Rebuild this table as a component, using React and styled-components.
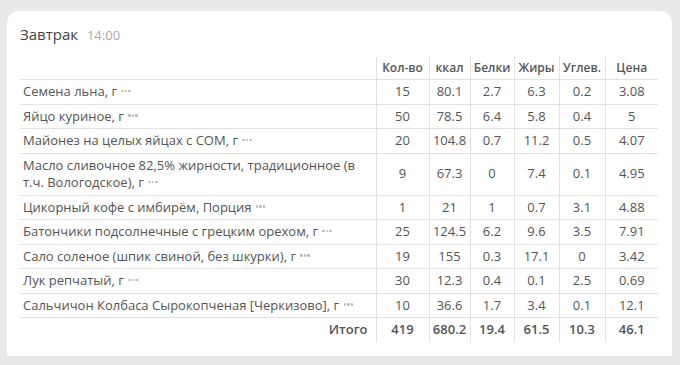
import React from "react";
import styled, { createGlobalStyle } from "styled-components";

const GlobalStyle = createGlobalStyle`
  html, body {
    margin: 0;
    padding: 0;
    background: #e9e9e9;
  }
  body {
    font-family: "Open Sans", "Liberation Sans", sans-serif;
  }
`;

const rows = [
  { name: "Семена льна, г", qty: 15, kcal: "80.1", p: "2.7", f: "6.3", c: "0.2", price: "3.08" },
  { name: "Яйцо куриное, г", qty: 50, kcal: "78.5", p: "6.4", f: "5.8", c: "0.4", price: "5" },
  { name: "Майонез на целых яйцах с СОМ, г", qty: 20, kcal: "104.8", p: "0.7", f: "11.2", c: "0.5", price: "4.07" },
  { name: "Масло сливочное 82,5% жирности, традиционное (в т.ч. Вологодское), г", qty: 9, kcal: "67.3", p: "0", f: "7.4", c: "0.1", price: "4.95" },
  { name: "Цикорный кофе с имбирём, Порция", qty: 1, kcal: "21", p: "1", f: "0.7", c: "3.1", price: "4.88" },
  { name: "Батончики подсолнечные с грецким орехом, г", qty: 25, kcal: "124.5", p: "6.2", f: "9.6", c: "3.5", price: "7.91" },
  { name: "Сало соленое (шпик свиной, без шкурки), г", qty: 19, kcal: "155", p: "0.3", f: "17.1", c: "0", price: "3.42" },
  { name: "Лук репчатый, г", qty: 30, kcal: "12.3", p: "0.4", f: "0.1", c: "2.5", price: "0.69" },
  { name: "Сальчичон Колбаса Сырокопченая [Черкизово], г", qty: 10, kcal: "36.6", p: "1.7", f: "3.4", c: "0.1", price: "12.1" },
];

export default function App() {
  return (
    <Page>
      <GlobalStyle />
      <Card>
        <Title>
          Завтрак <Time>14:00</Time>
        </Title>
        <Table>
          <colgroup>
            <col style={{ width: 356 }} />
            <col style={{ width: 53 }} />
            <col style={{ width: 41 }} />
            <col style={{ width: 44 }} />
            <col style={{ width: 45 }} />
            <col style={{ width: 46 }} />
            <col style={{ width: 53 }} />
          </colgroup>
          <thead>
            <tr>
              <Th />
              <Th $num>Кол-во</Th>
              <Th $num>ккал</Th>
              <Th $num>Белки</Th>
              <Th $num>Жиры</Th>
              <Th $num>Углев.</Th>
              <Th $num>Цена</Th>
            </tr>
          </thead>
          <tbody>
            {rows.map((r) => (
              <Row key={r.name}>
                <NameCell>
                  {r.name} <More><i /><i /><i /></More>
                </NameCell>
                <Td>{r.qty}</Td>
                <Td>{r.kcal}</Td>
                <Td>{r.p}</Td>
                <Td>{r.f}</Td>
                <Td>{r.c}</Td>
                <Td>{r.price}</Td>
              </Row>
            ))}
            <Row>
              <TotalLabel>Итого</TotalLabel>
              <Td $bold>419</Td>
              <Td $bold>680.2</Td>
              <Td $bold>19.4</Td>
              <Td $bold>61.5</Td>
              <Td $bold>10.3</Td>
              <Td $bold>46.1</Td>
            </Row>
          </tbody>
        </Table>
      </Card>
    </Page>
  );
}

const Page = styled.div`
  padding: 11px 8px 0 7px;
  height: 365px;
  box-sizing: border-box;
  overflow: hidden;
`;

const Card = styled.div`
  background: #fff;
  border-radius: 12px 12px 0 0;
  padding: 13px 14px 14px 13px;
  height: 345px;
  box-sizing: border-box;
`;

const Title = styled.div`
  font-size: 15px;
  color: #444;
  line-height: 20px;
  margin-bottom: 11px;
`;

const Time = styled.span`
  font-size: 13px;
  color: #aaa;
  margin-left: 5px;
`;

const Table = styled.table`
  width: 638px;
  table-layout: fixed;
  border-collapse: collapse;
  font-size: 13px;
  color: #555;
`;

const Th = styled.th`
  font-size: 12px;
  font-weight: 600;
  color: #555;
  height: 23px;
  padding: 0 2px;
  text-align: center;
  vertical-align: middle;
  border-left: ${(p) => (p.$num ? "1px solid #e2e2e2" : "none")};
`;

const Row = styled.tr`
  border-top: 1px solid #e2e2e2;
`;

const NameCell = styled.td`
  padding: 3px;
  line-height: 17.5px;
  text-align: left;
  vertical-align: middle;
`;

const TotalLabel = styled.td`
  padding: 3px 8px 3px 3px;
  line-height: 17px;
  text-align: right;
  font-weight: 600;
`;

const Td = styled.td`
  padding: 3px 0;
  line-height: 17.5px;
  text-align: center;
  vertical-align: middle;
  border-left: 1px solid #e2e2e2;
  font-weight: ${(p) => (p.$bold ? 600 : 400)};
`;

const More = styled.span`
  display: inline-flex;
  gap: 1px;
  vertical-align: middle;
  margin-left: 1px;
  margin-top: -3px;

  i {
    display: block;
    width: 2.5px;
    height: 2.5px;
    border-radius: 1px;
    background: #bbb;
  }
`;
